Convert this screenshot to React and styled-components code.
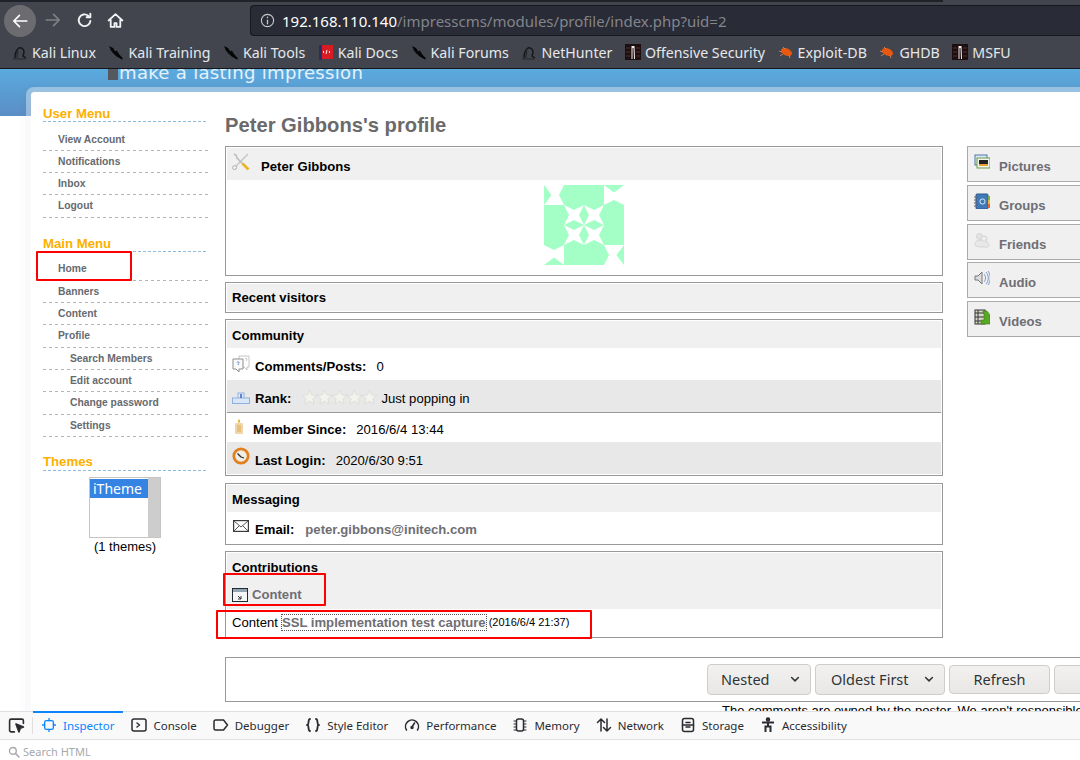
import React from "react";
import styled, { createGlobalStyle } from "styled-components";

const Global = createGlobalStyle`
  html, body { margin: 0; padding: 0; background: #fff; }
  #root { width: 1080px; height: 760px; overflow: hidden; }
  * { box-sizing: border-box; }
`;

const Shell = styled.div`
  width: 1080px; height: 760px; display: flex; flex-direction: column; overflow: hidden;
  font-family: "Liberation Sans", Arial, sans-serif; background: #fff;
`;

/* ---------- browser chrome ---------- */
const Chrome = styled.header`
  height: 69px; flex: none; background: #42454e; border-bottom: 1px solid #15161c;
  font-family: "Noto Sans", sans-serif; display: flex; flex-direction: column;
`;
const TabEdge = styled.div`height: 2px; width: 943px; background: #20222a; flex: none;`;
const NavBar = styled.div`height: 36px; display: flex; align-items: center; flex: none; padding-left: 4px;`;
const BackButton = styled.div`
  width: 32px; height: 32px; border-radius: 50%; background: #6c6c70; display: flex;
  align-items: center; justify-content: center; flex: none; margin-top: 1px;
`;
const NavIcon = styled.div`
  width: 30px; display: flex; justify-content: center; flex: none; margin-left: ${p => p.$ml || 0}px;
`;
const UrlBar = styled.div`
  height: 31px; flex: 1; margin-left: 120px; margin-top: 1px; background: #292b36; border: 1px solid #17181e;
  border-right: 0; border-radius: 4px 0 0 4px; display: flex; align-items: center; padding-left: 9px;
  font-size: 15px; white-space: nowrap;
`;
const Host = styled.span`color: #fff; margin-left: 7px;`;
const UrlPath = styled.span`color: #83858c;`;
const Bookmarks = styled.nav`
  flex: 1; display: flex; align-items: center; padding: 0 0 2px 12px; gap: 12.5px;
`;
const Bookmark = styled.div`
  display: flex; align-items: center; gap: 4px; color: #e6e8ec; font-size: 14.2px; white-space: nowrap;
`;
const BookmarkIcon = styled.span`width: 16px; display: flex; justify-content: center; flex: none;`;

/* ---------- web page ---------- */
const Page = styled.main`
  position: relative; height: 642px; flex: none; overflow: hidden; background-color: #fff;
  background-image: linear-gradient(#5aaade, #5a8ec5);
  background-size: 100% 47px; background-repeat: no-repeat;
`;
const Banner = styled.div`
  height: 18px; overflow: hidden; padding-left: 108px; display: flex; align-items: flex-start;
`;
const BannerMark = styled.span`width: 10px; height: 11px; background: #55595f; flex: none;`;
const BannerText = styled.span`
  font-family: "DejaVu Sans", sans-serif; font-size: 18.1px; line-height: 18px; margin-top: -5px;
  color: #e4f1fa; white-space: nowrap; letter-spacing: .27px; margin-left: 1px;
`;
const Card = styled.div`
  margin-left: 26px; width: 1100px; height: 700px; display: flex;
  border-style: solid; border-color: rgba(240,243,246,.42); border-width: 5px 0 0 5px; border-top-left-radius: 8px;
  background: #fff; background-clip: padding-box; box-shadow: -4px 0 6px rgba(0,0,0,.02);
`;

const Sidebar = styled.aside`width: 177px; padding: 14px 0 0 12px; flex: none; margin-right: 17px;`;
const MenuBlock = styled.section`margin-bottom: ${p => p.$mb || 19}px;`;
const MenuTitle = styled.h3`
  margin: 0; height: 15px; line-height: 15px; font-size: 13.2px; font-weight: bold; color: #fcb000;
`;
const TitleRule = styled.div`
  height: 1px; margin-top: ${p => p.$mt || 0}px; margin-bottom: ${p => p.$mb}px;
  background-image: repeating-linear-gradient(90deg, #8fbcdc 0 3px, transparent 3px 5px);
`;
const MenuItem = styled.div`
  height: 22.33px; line-height: 22px; font-size: 10.3px; font-weight: bold; color: #666a70;
  padding-left: ${p => (p.$sub ? 27 : 15)}px;
  background-image: repeating-linear-gradient(90deg, #b4b4b4 0 3px, transparent 3px 6px);
  background-size: 100% 1px; background-position: bottom; background-repeat: no-repeat;
`;
const ThemeBox = styled.div`display: flex; flex-direction: column; align-items: center; padding-right: 1px;`;
const ThemeList = styled.div`
  width: 72px; height: 61px; border: 1px solid #c8c6c2; padding: 1px 0 0 0; display: flex; background: #fff;
`;
const ThemeOptions = styled.div`flex: 1;`;
const ThemeOption = styled.div`
  height: 19px; background: #3584e4; color: #fff; font-family: "Noto Sans", sans-serif; font-size: 14px;
  line-height: 19px; padding-left: 3px;
`;
const ThemeScroll = styled.div`width: 12px; background: #cdcdcd; margin-top: -1px;`;
const ThemeCaption = styled.div`font-size: 13px; line-height: 15px; margin-top: 1px; color: #000;`;

const Content = styled.div`flex: 1; min-width: 0;`;
const Columns = styled.div`display: flex; gap: 24px; align-items: flex-start;`;
const MainCol = styled.div`width: 718px; flex: none; padding-top: 21px;`;
const Heading = styled.h1`
  margin: 0 0 9px; font-size: 20.2px; line-height: 24px; color: #6a6a6a; font-weight: bold;
`;
const Boxes = styled.div`display: flex; flex-direction: column; gap: 6px;`;
const Box = styled.section`
  border: 1px solid #999; padding: 1px; background: #fff; margin-bottom: ${p => p.$mb || 0}px;
`;
const BoxHead = styled.div`
  background: #f0f0f0; font-size: 13.12px; font-weight: bold; color: #000;
  height: ${p => p.$h || 27}px; line-height: ${p => p.$lh || 30}px; padding-left: 5px;
`;
const ProfileHead = styled.div`
  background: #f0f0f0; height: 32px; display: flex; align-items: flex-end; padding: 0 0 6.5px 5px; gap: 11px;
  font-size: 13.12px; font-weight: bold; line-height: 15px; color: #000;
`;
const AvatarArea = styled.div`height: 94px; padding-top: 5px; display: flex; justify-content: center; align-items: flex-start;`;
const Row = styled.div`
  height: ${p => p.$h}px; display: flex; align-items: flex-end; padding: 0 0 ${p => p.$pb || 6.5}px ${p => p.$pl || 5}px;
  background: ${p => (p.$alt ? "#e8e8e8" : "#fff")};
  border-bottom: ${p => (p.$line ? "1px solid #999" : "0")};
  font-size: 13.12px; line-height: 15px; color: #000; white-space: nowrap;
`;
const RowIcon = styled.span`
  display: flex; flex: none; margin: 0 ${p => p.$gap}px ${p => p.$lift}px 0;
`;
const Label = styled.b`margin-right: 10px;`;
const MailLink = styled.b`color: #6e6e74; margin-left: 1px;`;
const Stars = styled.span`display: flex; margin: 0 4px 1px 1px;`;
const ContentLink = styled.div`
  display: flex; align-items: flex-end; gap: 4px; height: 26px; padding-bottom: 7px;
  color: #6e6e74; font-size: 13.12px; line-height: 15px;
`;
const ItemLink = styled.b`color: #6e6e74; outline: 1px dotted #555; margin: 0 3px 0 4px;`;
const DateText = styled.span`font-size: 11px;`;

const TabsCol = styled.div`
  width: 140px; flex: none; display: flex; flex-direction: column; gap: 2.75px; padding-top: 54px;
`;
const SideTab = styled.div`
  height: 36px; background: #f0f0f0; border: 1px solid #aaa; display: flex; align-items: flex-end;
  padding: 0 0 7px 6px; gap: 8px; font-size: 13.12px; font-weight: bold; line-height: 15px; color: #6e6e74;
`;
const TabIcon = styled.span`display: flex; width: 17px; margin-bottom: 4px; flex: none;`;

const CommentBox = styled.div`
  margin-top: 19px; width: 900px; height: 45px; border: 1px solid #999; display: flex; justify-content: flex-end;
  align-items: center; gap: 4px; padding: 0 7px 0 0; font-family: "Noto Sans", sans-serif;
`;
const ActionButton = styled.div`
  height: ${p => (p.$pl ? 31 : 29)}px; width: ${p => p.$w}px; flex: none; border: 1px solid #cfcdca; border-radius: 4px; background: linear-gradient(#f2f1f0, #e9e7e5);
  color: #2e3436; font-size: 14.5px; display: flex; align-items: center; justify-content: ${p => (p.$pl ? "space-between" : "center")};
  padding: 0 ${p => (p.$pl ? 9 : 0)}px 2px ${p => p.$pl || 0}px; white-space: nowrap;
`;
const Notice = styled.div`
  font-size: 13px; line-height: 15px; padding-left: 497px; margin-top: 1px; color: #000; white-space: nowrap;
`;
const Callout = styled.div`
  position: absolute; left: ${p => p.$x}px; top: ${p => p.$y}px; width: ${p => p.$w}px; height: ${p => p.$h}px;
  border: 2px solid #f00; border-radius: 1px; pointer-events: none;
`;

/* ---------- devtools ---------- */
const Devtools = styled.footer`flex: 1; font-family: "Noto Sans", sans-serif; background: #fff;`;
const ToolTabs = styled.div`
  height: 29px; background: #f9f9fa; border-top: 1px solid #e0e0e2; border-bottom: 1px solid #e0e0e2; display: flex; align-items: stretch;
`;
const PickButton = styled.div`
  width: 33px; flex: none; display: flex; align-items: center; padding-left: 8px; position: relative;
`;
const PickDivider = styled.span`position: absolute; right: 0; top: 5px; bottom: 5px; width: 1px; background: #e0e0e2;`;
const ToolTab = styled.div`
  display: flex; align-items: center; gap: ${p => (p.$active ? 7 : 6)}px; padding: 0 ${p => (p.$active ? 9 : 8)}px; font-size: 11.5px; white-space: nowrap;
  color: ${p => (p.$active ? "#0a84ff" : "#2b2b30")};
  box-shadow: ${p => (p.$active ? "inset 0 2px 0 #0a84ff" : "none")};
  margin-top: -1px;
`;
const SearchRow = styled.div`
  height: 20px; display: flex; align-items: center; gap: 3px; padding: 3px 0 0 8px; color: #a8a8ac; font-size: 11px;
`;

/* ---------- drawings ---------- */
const Svg = ({ s = 16, w, h, children, vb }) => (
  <svg width={w || s} height={h || s} viewBox={vb || `0 0 ${s} ${s}`} fill="none" style={{ display: "block", flex: "none" }}>{children}</svg>
);

const Dragon = () => (
  <Svg>
    <path d="M3 14c0-4 1-8 4-10 2-1 5 1 5 4 0 2-1 3-1 4l3 2" stroke="#16171b" strokeWidth="1.5" />
    <path d="M1 15h13M6 7c-1 2-1 4-1 7" stroke="#26272c" strokeWidth="1.2" />
  </Svg>
);
const Dagger = () => (
  <Svg>
    <path d="M1 2l4 2 2 3 3 2 5 5.500-1.200 1L8 12 5.500 9 3.500 7z" fill="#050505" />
    <path d="M3 5l4 5M8 7l2 3" stroke="#0a0a0a" strokeWidth="2" />
  </Svg>
);
const RedBook = () => (
  <Svg w={14} h={16} vb="0 0 14 16"><rect x="0" y="1" width="14" height="14" fill="#d81c23" /><rect x="0" y="1" width="3" height="15" fill="#2c2d62" /><path d="M5 7l-1 1 1 1M10 7l1 1-1 1M8 6L7 10" stroke="#fff" strokeWidth=".9" /></Svg>
);
const Bug = () => (
  <Svg><ellipse cx="8.500" cy="8" rx="5.800" ry="3.600" transform="rotate(25 8.500 8)" fill="#e8590f" /><path d="M5 3l2 2M1 7l3 1M2 12l3-2M12 14l-1-3" stroke="#e88a5c" strokeWidth=".8" /></Svg>
);
const Msfu = () => (
  <Svg><rect width="16" height="16" fill="#1d0f10" /><path d="M1 4h4M1 8h4M1 12h4M11 4h4M11 8h4M11 12h4" stroke="#5a3030" strokeWidth="1" /><path d="M6.500 15V2h3l.5 13H9L8.500 4h-1L7.500 15z" fill="#f2eeee" /></Svg>
);

const Tools = () => (
  <Svg s={18}>
    <path d="M16 1L2.500 14.500" stroke="#c6c6c6" strokeWidth="1.400" /><circle cx="2.600" cy="14.600" r="2" stroke="#b0b0b0" fill="#f2f2f2" />
    <path d="M2 1l2 1 1 3 6 6" stroke="#bcbcbc" strokeWidth="1.500" /><path d="M10.500 10.500l6 6" stroke="#eeb422" strokeWidth="2.600" />
  </Svg>
);
const Bubbles = () => (
  <Svg s={18}>
    <path d="M7 1h10v11h-2v3l-3-3H7z" fill="#fff" stroke="#c4c4c4" /><path d="M1 4h10v10H7v3l-3-3H1z" fill="#fafafa" stroke="#8f8f8f" />
    <path d="M5 7.500c0-1 2-1 2 0S6 9 6 10" stroke="#6c8fc0" /><path d="M13 4c0-1 2-1 2 0s-1 1-1 2" stroke="#b9c7dc" />
  </Svg>
);
const Podium = () => (
  <Svg w={18} h={12} vb="0 0 18 12">
    <rect x="6" y="1" width="6" height="10" fill="#e0ebfa" stroke="#8fb0e0" /><rect x="0.500" y="6" width="17" height="5.500" fill="#d8e6f8" stroke="#8fb0e0" /><path d="M9 2v4" stroke="#2a59c0" strokeWidth="1.400" />
  </Svg>
);
const Candle = () => (
  <Svg w={10} h={15} vb="0 0 10 15">
    <rect x="1" y="4" width="8" height="11" rx="1" fill="#efd6a8" /><rect x="3" y="6" width="4" height="7" fill="#e6c07c" /><path d="M5 0c1.600 2 1.600 3 0 4-1.600-1-1.600-2 0-4z" fill="#e6b43c" />
  </Svg>
);
const Clock = () => (
  <Svg s={18}>
    <circle cx="9" cy="9" r="7.200" fill="#eeeee6" stroke="#e2801f" strokeWidth="2.800" /><path d="M9 10L5.500 6.500M9 10l3 1" stroke="#2b2b2b" strokeWidth="1.300" />
  </Svg>
);
const Mail = () => (
  <Svg w={16} h={12} vb="0 0 16 12">
    <rect x=".6" y=".6" width="14.800" height="10.800" fill="#fff" stroke="#3c3c3c" strokeWidth="1.200" /><path d="M1 1l7 6 7-6M1 11l5-5M15 11l-5-5" stroke="#555" />
  </Svg>
);
const Star = () => (
  <Svg s={15}><path d="M7.500 0l2.100 4.900 5.300.4-4 3.500 1.200 5.200-4.600-2.800-4.600 2.800 1.200-5.200-4-3.500 5.300-.4z" fill="#f3f3ee" stroke="#d9d9d6" strokeWidth=".8" /></Svg>
);
const WindowIcon = () => (
  <Svg w={16} h={14} vb="0 0 16 14">
    <rect x=".5" y=".5" width="15" height="13" fill="#f4f6f7" stroke="#1f2a33" /><rect x="1" y="1" width="14" height="3" fill="#93a6b4" /><path d="M6 8l3 3M9 8v3H6" stroke="#333" />
  </Svg>
);
const Pictures = () => (
  <Svg>
    <rect x="1" y="1" width="12" height="10" fill="#dce9f5" stroke="#4a78a8" /><rect x="3" y="4" width="13" height="10" fill="#f4f4ee" stroke="#6a9c42" /><rect x="5" y="6" width="9" height="6" fill="#222" /><rect x="5" y="10" width="9" height="2" fill="#e9a02d" />
  </Svg>
);
const Groups = () => (
  <Svg>
    <rect x="2" y="1" width="12" height="15" rx="1" fill="#3f79b8" stroke="#2d5a8e" /><path d="M14 3h2v4h-2z" fill="#7cb342" /><path d="M14 7h2v4h-2z" fill="#f2b632" /><path d="M14 11h2v4h-2z" fill="#e8652f" /><path d="M0 4h3M0 7h3M0 10h3M0 13h3" stroke="#666" strokeWidth="1.200" /><circle cx="8.500" cy="8.500" r="2.600" stroke="#dfeaf5" />
  </Svg>
);
const Friends = () => (
  <Svg>
    <circle cx="5.500" cy="4.500" r="3" fill="#e4e4e4" stroke="#d2d2d2" /><circle cx="10" cy="7" r="3" fill="#ececec" stroke="#d2d2d2" /><path d="M1 12c0-3 3-4 5-4l3 1c3 0 6 1 6 4s-3 2-6 2-8 0-8-3z" fill="#e8e8e8" stroke="#d6d6d6" />
  </Svg>
);
const Audio = () => (
  <Svg>
    <path d="M1 6h3l4-4v12l-4-4H1z" fill="#ddd" stroke="#777" /><path d="M10 4c2 2 2 6 0 8M12 2c3 3 3 9 0 12M14 1c3 4 3 10 0 14" stroke="#6f93c9" strokeWidth=".9" />
  </Svg>
);
const Film = () => (
  <Svg>
    <rect x="1" y="1" width="10" height="14" fill="#d8d8c8" stroke="#333" /><path d="M1 4h10M1 8h10M1 12h10M4 1v14" stroke="#333" /><path d="M9 2h4l3 4v9H7v-4h3V4H9z" fill="#58a821" stroke="#3f7d15" strokeWidth=".6" />
  </Svg>
);
const Avatar = () => (
  <svg width="80" height="80" viewBox="0 0 80 80" style={{ display: "block" }}>
    <rect width="80" height="80" fill="#a3ffc5" />
    <g fill="#fff">
      {[0, 90, 180, 270].map(r => (
        <g key={r} transform={`rotate(${r} 40 40)`}>
          <polygon points="0,0 20,0 15,10 20,20 0,20 7.500,10" />
          <polygon points="20,20 30,25 40,20 35,30 40,40 30,35 20,40 25,30" />
        </g>
      ))}
    </g>
  </svg>
);

const Stroke = ({ children, s = 16, c = "#2b2b30" }) => (
  <svg width={s} height={s} viewBox="0 0 16 16" fill="none" stroke={c} strokeWidth="1.500" strokeLinecap="round" strokeLinejoin="round" style={{ display: "block", flex: "none" }}>{children}</svg>
);

const bookmarks = [
  ["Kali Linux", Dragon], ["Kali Training", Dagger], ["Kali Tools", Dagger], ["Kali Docs", RedBook], ["Kali Forums", Dagger],
  ["NetHunter", Dragon], ["Offensive Security", Msfu], ["Exploit-DB", Bug], ["GHDB", Bug], ["MSFU", Msfu],
];
const tools = [
  ["Console", <><rect x="1" y="2" width="14" height="12" rx="2" /><path d="M6 6l2.500 2L6 10" /></>],
  ["Debugger", <path d="M2.500 3h8l4 5-4 5h-8a1.500 1.500 0 0 1-1.500-1.500v-7A1.500 1.500 0 0 1 2.500 3z" />],
  ["Style Editor", <path d="M5 2C3 2 4 6 3 7.500 2.500 8 2 8 2 8s.5 0 1 .5C4 10 3 14 5 14M11 2c2 0 1 4 2 5.500.5.500 1 .500 1 .500s-.5 0-1 .500C12 10 13 14 11 14" strokeWidth="1.800" />],
  ["Performance", <><path d="M2.500 13a6.500 6.500 0 1 1 11 0" /><path d="M8 10l2.500-4" /><circle cx="8" cy="10.500" r="1" /></>],
  ["Memory", <><rect x="4.500" y="2" width="7" height="12" rx="2" /><path d="M2 4h2M2 7h2M2 10h2M2 13h2M12 4h2M12 7h2M12 10h2M12 13h2" strokeWidth="1" /></>],
  ["Network", <path d="M5 14V2M1.500 5.500L5 2l3.500 3.500M11 2v12M7.500 10.500L11 14l3.500-3.500" />],
  ["Storage", <><rect x="2.500" y="1.500" width="11" height="13" rx="2" /><path d="M6 5.500h4M6 10h4M2.500 8h11" /></>],
  ["Accessibility", <><circle cx="8" cy="2.500" r="1.500" fill="#2b2b30" /><path d="M2 5.500h12M8 5.500v4M5.500 15V9.500h5V15" strokeWidth="2" strokeLinecap="butt" strokeLinejoin="miter" /></>],
];
const userMenu = ["View Account", "Notifications", "Inbox", "Logout"];
const mainMenu = [["Home"], ["Banners"], ["Content"], ["Profile"], ["Search Members", 1], ["Edit account", 1], ["Change password", 1], ["Settings", 1]];
const sideTabs = [["Pictures", Pictures], ["Groups", Groups], ["Friends", Friends], ["Audio", Audio], ["Videos", Film]];

export default function App() {
  return (
    <Shell>
      <Global />
      <Chrome>
        <TabEdge />
        <NavBar>
          <BackButton>
            <Stroke s={18} c="#fff"><path d="M14 8H2.500M7.500 3L2.500 8l5 5" /></Stroke>
          </BackButton>
          <NavIcon $ml={2}><Stroke s={18} c="#7f8188"><path d="M2 8h11.500M8.500 3l5 5-5 5" /></Stroke></NavIcon>
          <NavIcon $ml={1}><Stroke s={17} c="#f2f2f4"><path d="M13.500 8.500A5.500 5.500 0 1 1 11.500 3.500M13.500 1.500v3.500H10" strokeWidth="1.800" /></Stroke></NavIcon>
          <NavIcon $ml={1}><Stroke s={17} c="#f2f2f4"><path d="M1.500 8L8 2l6.500 6M3.500 7v7h3.500v-3.500h2V14h3.500V7" strokeWidth="1.700" /></Stroke></NavIcon>
          <UrlBar>
            <Stroke s={15} c="#c9cace"><circle cx="8" cy="8" r="6.500" strokeWidth="1.200" /><path d="M8 7.500V11.500M8 4.500v.5" strokeWidth="1.400" /></Stroke>
            <Host>192.168.110.140</Host><UrlPath>/impresscms/modules/profile/index.php?uid=2</UrlPath>
          </UrlBar>
        </NavBar>
        <Bookmarks>
          {bookmarks.map(([name, Icon]) => (
            <Bookmark key={name}><BookmarkIcon><Icon /></BookmarkIcon>{name}</Bookmark>
          ))}
        </Bookmarks>
      </Chrome>

      <Page>
        <Banner><BannerMark /><BannerText>make a lasting impression</BannerText></Banner>
        <Card>
          <Sidebar>
            <MenuBlock $mb={18.5}>
              <MenuTitle>User Menu</MenuTitle>
              <TitleRule $mb={6.5} />
              {userMenu.map(m => <MenuItem key={m}>{m}</MenuItem>)}
            </MenuBlock>
            <MenuBlock $mb={17}>
              <MenuTitle>Main Menu</MenuTitle>
              <TitleRule $mb={6} />
              {mainMenu.map(([m, sub]) => <MenuItem key={m} $sub={sub}>{m}</MenuItem>)}
            </MenuBlock>
            <MenuBlock>
              <MenuTitle>Themes</MenuTitle>
              <TitleRule $mt={1} $mb={6} />
              <ThemeBox>
                <ThemeList>
                  <ThemeOptions><ThemeOption>iTheme</ThemeOption></ThemeOptions>
                  <ThemeScroll />
                </ThemeList>
                <ThemeCaption>(1 themes)</ThemeCaption>
              </ThemeBox>
            </MenuBlock>
          </Sidebar>

          <Content>
            <Columns>
              <MainCol>
                <Heading>Peter Gibbons's profile</Heading>
                <Boxes>
                  <Box>
                    <ProfileHead><RowIcon $gap={0} $lift={3}><Tools /></RowIcon>Peter Gibbons</ProfileHead>
                    <AvatarArea><Avatar /></AvatarArea>
                  </Box>
                  <Box><BoxHead $lh={28}>Recent visitors</BoxHead></Box>
                  <Box $mb={1}>
                    <BoxHead>Community</BoxHead>
                    <Row $h={32}><RowIcon $gap={5} $lift={1}><Bubbles /></RowIcon><Label>Comments/Posts:</Label>0</Row>
                    <Row $h={33} $alt $line><RowIcon $gap={5} $lift={2}><Podium /></RowIcon><Label>Rank:</Label><Stars>{[0, 1, 2, 3, 4].map(i => <Star key={i} />)}</Stars>Just popping in</Row>
                    <Row $h={29} $pb={5.500} $pl={7}><RowIcon $gap={9} $lift={3}><Candle /></RowIcon><Label>Member Since:</Label>2016/6/4 13:44</Row>
                    <Row $h={32} $alt><RowIcon $gap={5} $lift={3}><Clock /></RowIcon><Label>Last Login:</Label>2020/6/30 9:51</Row>
                  </Box>
                  <Box>
                    <BoxHead>Messaging</BoxHead>
                    <Row $h={31} $pl={6} $pb={6}><RowIcon $gap={6} $lift={5}><Mail /></RowIcon><Label>Email:</Label><MailLink>peter.gibbons@initech.com</MailLink></Row>
                  </Box>
                  <Box>
                    <BoxHead $h={56}>
                      Contributions
                      <ContentLink><RowIcon $gap={0} $lift={0}><WindowIcon /></RowIcon><b>Content</b></ContentLink>
                    </BoxHead>
                    <Row $h={27} $pb={6}>Content<ItemLink>SSL implementation test capture</ItemLink><DateText>(2016/6/4 21:37)</DateText></Row>
                  </Box>
                </Boxes>
              </MainCol>
              <TabsCol>
                {sideTabs.map(([name, Icon]) => (
                  <SideTab key={name}><TabIcon><Icon /></TabIcon>{name}</SideTab>
                ))}
              </TabsCol>
            </Columns>
            <CommentBox>
              <ActionButton $pl={13} $w={104}>Nested<Stroke s={12} c="#2e3436"><path d="M3.500 6L8 10.500 12.500 6" strokeWidth="2" /></Stroke></ActionButton>
              <ActionButton $pl={15} $w={130}>Oldest First<Stroke s={12} c="#2e3436"><path d="M3.500 6L8 10.500 12.500 6" strokeWidth="2" /></Stroke></ActionButton>
              <ActionButton $w={101}>Refresh</ActionButton>
              <ActionButton $w={63} />
            </CommentBox>
            <Notice>The comments are owned by the poster. We aren't responsible for their content.</Notice>
          </Content>
        </Card>
        <Callout $x={36} $y={182} $w={96} $h={30} />
        <Callout $x={223} $y={504} $w={103} $h={33} />
        <Callout $x={216} $y={541} $w={376} $h={29} />
      </Page>

      <Devtools>
        <ToolTabs>
          <PickButton>
            <Stroke s={17}><path d="M6 14H3a1.500 1.500 0 0 1-1.500-1.500v-9A1.500 1.500 0 0 1 3 2h10a1.500 1.500 0 0 1 1.500 1.500V6" /><path d="M7.500 6.500l7 3-3 1.200-1.200 3.300z" fill="#2b2b30" /></Stroke>
            <PickDivider />
          </PickButton>
          <ToolTab $active>
            <Stroke s={14} c="#0a84ff"><rect x="3" y="3" width="10" height="10" rx="2" /><path d="M8 .5v2.500M8 13v2.500M.5 8H3M13 8h2.500" /></Stroke>
            Inspector
          </ToolTab>
          {tools.map(([name, icon]) => (
            <ToolTab key={name}><Stroke>{icon}</Stroke>{name}</ToolTab>
          ))}
        </ToolTabs>
        <SearchRow>
          <Stroke s={12} c="#a8a8ac"><circle cx="6.500" cy="6.500" r="4.500" strokeWidth="1.800" /><path d="M10 10l4.500 4.500" strokeWidth="2" /></Stroke>
          Search HTML
        </SearchRow>
      </Devtools>
    </Shell>
  );
}
